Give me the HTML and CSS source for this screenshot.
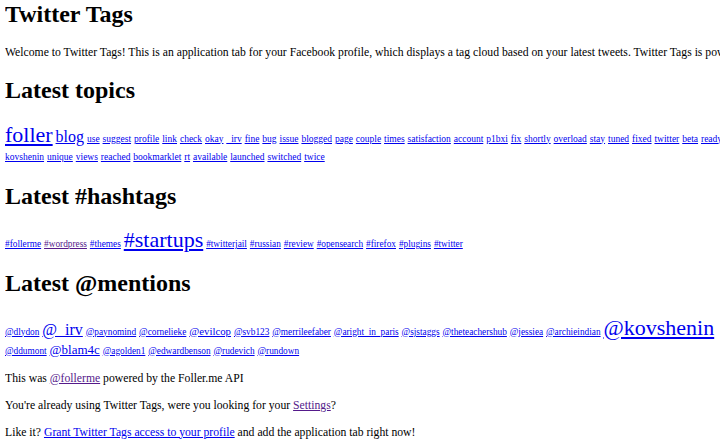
FILE: index.html
```html
<!DOCTYPE html>
<html lang="en">

<head>
    <meta charset="UTF-8">
    <title>Twitter Tags</title>
    <link rel="stylesheet" href="styles.css">
</head>

<body>

    <h1>Twitter Tags</h1>
    <p class="intro">Welcome to Twitter Tags! This is an application tab for your Facebook profile, which displays a tag cloud based on your latest tweets. Twitter Tags is powered by Foller.me.</p>

    <h2>Latest topics</h2>
    <div class="cloud topics">
        <a href="#" class="tag-big">foller</a>
        <a href="#" class="tag-mid">blog</a>
        <a href="#">use</a>
        <a href="#">suggest</a>
        <a href="#">profile</a>
        <a href="#">link</a>
        <a href="#">check</a>
        <a href="#">okay</a>
        <a href="#">_irv</a>
        <a href="#">fine</a>
        <a href="#">bug</a>
        <a href="#">issue</a>
        <a href="#">blogged</a>
        <a href="#">page</a>
        <a href="#">couple</a>
        <a href="#">times</a>
        <a href="#">satisfaction</a>
        <a href="#">account</a>
        <a href="#">p1bxi</a>
        <a href="#">fix</a>
        <a href="#">shortly</a>
        <a href="#">overload</a>
        <a href="#">stay</a>
        <a href="#">tuned</a>
        <a href="#">fixed</a>
        <a href="#">twitter</a>
        <a href="#">beta</a>
        <a href="#">ready</a>
        <a href="#">kovshenin</a>
        <a href="#">unique</a>
        <a href="#">views</a>
        <a href="#">reached</a>
        <a href="#">bookmarklet</a>
        <a href="#">rt</a>
        <a href="#">available</a>
        <a href="#">launched</a>
        <a href="#">switched</a>
        <a href="#">twice</a>
    </div>

    <h2>Latest #hashtags</h2>
    <div class="cloud">
        <a href="#">#follerme</a>
        <a href="#" class="visited">#wordpress</a>
        <a href="#">#themes</a>
        <a href="#" class="tag-big">#startups</a>
        <a href="#">#twitterjail</a>
        <a href="#">#russian</a>
        <a href="#">#review</a>
        <a href="#">#opensearch</a>
        <a href="#">#firefox</a>
        <a href="#">#plugins</a>
        <a href="#">#twitter</a>
    </div>

    <h2>Latest @mentions</h2>
    <div class="cloud">
        <a href="#">@dlydon</a>
        <a href="#" class="tag-mid">@_irv</a>
        <a href="#">@paynomind</a>
        <a href="#">@cornelieke</a>
        <a href="#" class="tag-small">@evilcop</a>
        <a href="#">@svb123</a>
        <a href="#">@merrileefaber</a>
        <a href="#">@aright_in_paris</a>
        <a href="#">@sjstaggs</a>
        <a href="#">@theteachershub</a>
        <a href="#">@jessiea</a>
        <a href="#">@archieindian</a>
        <a href="#" class="tag-big">@kovshenin</a>
        <a href="#">@ddumont</a>
        <a href="#" class="tag-medium">@blam4c</a>
        <a href="#">@agolden1</a>
        <a href="#">@edwardbenson</a>
        <a href="#">@rudevich</a>
        <a href="#">@rundown</a>
    </div>

    <p>This was <a href="#" class="visited">@follerme</a> powered by the Foller.me API</p>
    <p>You're already using Twitter Tags, were you looking for your <a href="#" class="visited">Settings</a>?</p>
    <p>Like it? <a href="#">Grant Twitter Tags access to your profile</a> and add the application tab right now!</p>

</body>

</html>
```

FILE: styles.css
```css
html {
    overflow: hidden;
}

body {
    font-family: "Liberation Serif", "Times New Roman", serif;
    font-size: 11.7px;
    width: 752px;
    margin: 1px 5px;
    color: #000;
    background-color: #fff;
}

h1,
h2 {
    font-size: 24px;
    margin: 0;
}

h1 {
    margin-bottom: 18px;
}

h2 {
    margin-top: 17px;
    margin-bottom: 21.5px;
}

p {
    margin: 14px 0;
}

.intro {
    margin-bottom: 18px;
    white-space: nowrap;
}

.cloud + p {
    margin-top: 12px;
}

a {
    color: #0000ee;
}

a.visited {
    color: #551a8b;
}

.cloud {
    line-height: 18px;
}

.cloud a {
    font-size: 9.3px;
}

.topics a {
    font-size: 9.5px;
}

.cloud a.tag-small {
    font-size: 10.8px;
}

.cloud a.tag-medium {
    font-size: 13px;
}

.cloud a.tag-mid {
    font-size: 16px;
}

.cloud a.tag-big {
    font-size: 22px;
}
```
